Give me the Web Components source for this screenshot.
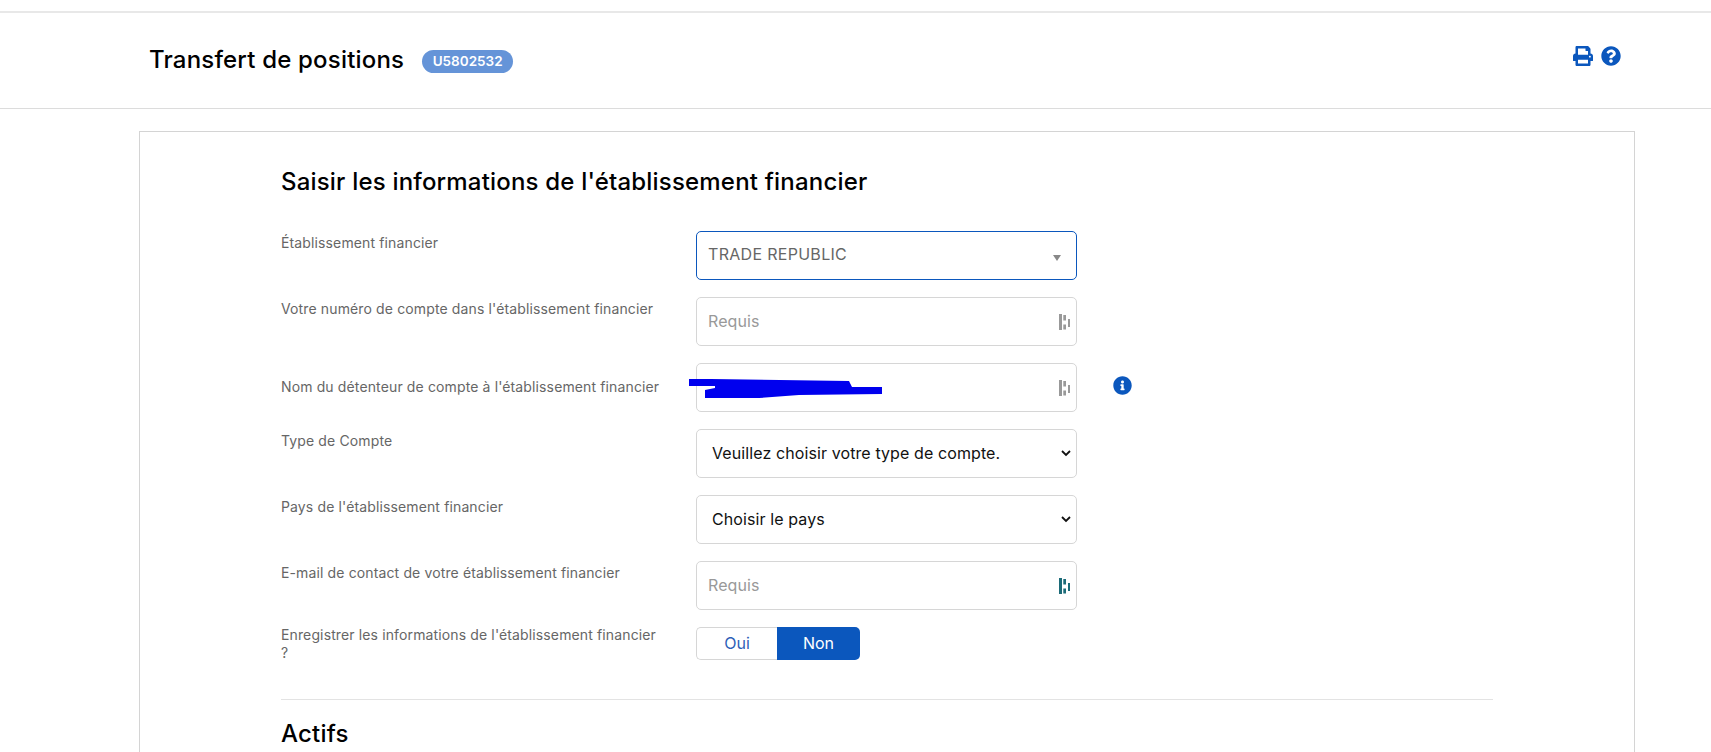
<!DOCTYPE html>
<html lang="fr">
<head>
<meta charset="utf-8">
<title>Transfert de positions</title>
<style>
  html, body { margin: 0; padding: 0; background: #fff; height: 100%; overflow: hidden; }
  body { font-family: Inter, "Liberation Sans", sans-serif; color: #000; }
</style>
</head>
<body>
<page-header account="U5802532">Transfert de positions</page-header>
<form-card>
  <form-section heading="Saisir les informations de l'établissement financier">
    <form-row label="Établissement financier"><combo-field>TRADE REPUBLIC</combo-field></form-row>
    <form-row label="Votre numéro de compte dans l'établissement financier"><text-field>Requis</text-field></form-row>
    <form-row label="Nom du détenteur de compte à l'établissement financier" hint center><text-field redacted></text-field></form-row>
    <form-row label="Type de Compte"><select-field>Veuillez choisir votre type de compte.</select-field></form-row>
    <form-row label="Pays de l'établissement financier"><select-field>Choisir le pays</select-field></form-row>
    <form-row label="E-mail de contact de votre établissement financier"><text-field active>Requis</text-field></form-row>
    <form-row label="Enregistrer les informations de l'établissement financier ?" tight><yes-no></yes-no></form-row>
  </form-section>
  <form-section heading="Actifs" divided></form-section>
</form-card>

<script>
// password manager mark shown at the right end of the text inputs
const FIELD_MARK = `<svg width="11" height="16" viewBox="0 0 11 16" fill="currentColor">
  <path d="M0 0h3v16H0zM4.300 1h2.700v5.500H4.300zM4.300 10.500h2.700v5H4.300zM9 5h2v8H9z"/>
</svg>`;

class PageHeader extends HTMLElement {
  constructor() {
    super();
    this.attachShadow({ mode: 'open' });
  }
  connectedCallback() {
    this.shadowRoot.innerHTML = `
      <style>
        :host { display: flex; align-items: center; box-sizing: border-box; height: 98px; margin-top: 11px; padding: 0 0 3px 149px;
                border-top: 2px solid #e8e8e8; border-bottom: 1px solid #dcdcdc; }
        h1 { margin: 2px 0 0; font-size: 24px; font-weight: 500; line-height: 30px; letter-spacing: .19px; }
        .badge { margin: 4px 0 0 18px; background: #6594d8; color: #fff; border-radius: 12px; height: 23px; line-height: 23px;
                 padding: 0 10.5px; font-size: 13.5px; font-weight: 600; }
        .icons { margin-left: auto; margin-right: 90px; display: flex; gap: 8px; color: #0b57bd; margin-top: -6px; }
        svg { display: block; }
      </style>
      <h1><slot></slot></h1>
      <span class="badge">${this.getAttribute('account')}</span>
      <div class="icons">
        <svg width="20" height="20" viewBox="0 0 512 512" fill="currentColor"><path d="M448 192V77.25c0-8.49-3.37-16.62-9.37-22.63L393.37 9.37c-6-6-14.14-9.37-22.63-9.37H96C78.33 0 64 14.33 64 32v160c-35.35 0-64 28.65-64 64v112c0 8.84 7.16 16 16 16h48v96c0 17.67 14.33 32 32 32h320c17.67 0 32-14.33 32-32v-96h48c8.84 0 16-7.16 16-16V256c0-35.35-28.65-64-64-64zm-64 256H128v-96h256v96zm0-224H128V64h192v48c0 8.84 7.16 16 16 16h48v96zm48 72c-13.25 0-24-10.75-24-24 0-13.26 10.75-24 24-24s24 10.74 24 24c0 13.25-10.75 24-24 24z"/></svg>
        <svg width="20" height="20" viewBox="0 0 512 512" fill="currentColor"><path d="M504 256c0 136.997-111.043 248-248 248S8 392.997 8 256C8 119.083 119.043 8 256 8s248 111.083 248 248zM262.655 90c-54.497 0-89.255 22.957-116.549 63.758-3.536 5.286-2.353 12.415 2.715 16.258l34.699 26.31c5.205 3.947 12.621 3.008 16.665-2.122 17.864-22.658 30.113-35.797 57.303-35.797 20.429 0 45.698 13.148 45.698 32.958 0 14.976-12.363 22.667-32.534 33.976C247.128 238.528 216 254.941 216 296v4c0 6.627 5.373 12 12 12h56c6.627 0 12-5.373 12-12v-1.333c0-28.462 83.186-29.647 83.186-106.667 0-58.002-60.165-102-116.531-102zM256 338c-25.365 0-46 20.635-46 46 0 25.364 20.635 46 46 46s46-20.636 46-46c0-25.365-20.635-46-46-46z"/></svg>
      </div>
    `;
  }
}

class FormCard extends HTMLElement {
  constructor() {
    super();
    this.attachShadow({ mode: 'open' }).innerHTML = `
      <style>
        :host { display: block; box-sizing: border-box; margin: 22px 0 0 139px; width: 1496px; height: 621px;
                border: 1px solid #d4d4d4; border-bottom: 0; padding: 35px 141px 0 141px; }
      </style>
      <slot></slot>
    `;
  }
}

class FormSection extends HTMLElement {
  constructor() {
    super();
    this.attachShadow({ mode: 'open' });
  }
  connectedCallback() {
    const divided = this.hasAttribute('divided');
    this.shadowRoot.innerHTML = `
      <style>
        :host { display: block; ${divided ? 'border-top: 1px solid #e3e3e3; margin-top: 37px; padding-top: 19px;' : ''} }
        h2 { margin: 0 0 34px; font-size: 24px; font-weight: 500; line-height: 30px; letter-spacing: .19px; }
        .rows { display: grid; row-gap: 17px; }
      </style>
      <h2>${this.getAttribute('heading')}</h2>
      <div class="rows"><slot></slot></div>
    `;
  }
}

class FormRow extends HTMLElement {
  constructor() {
    super();
    this.attachShadow({ mode: 'open' });
  }
  connectedCallback() {
    const hint = this.hasAttribute('hint') ? `<svg class="hint" width="19" height="19" viewBox="0 0 512 512" fill="#0b57bd"><path d="M256 8C119.043 8 8 119.083 8 256c0 136.997 111.043 248 248 248s248-111.003 248-248C504 119.083 392.957 8 256 8zm0 110c23.196 0 42 18.804 42 42s-18.804 42-42 42-42-18.804-42-42 18.804-42 42-42zm56 254c0 6.627-5.373 12-12 12h-88c-6.627 0-12-5.373-12-12v-24c0-6.627 5.373-12 12-12h12v-64h-12c-6.627 0-12-5.373-12-12v-24c0-6.627 5.373-12 12-12h64c6.627 0 12 5.373 12 12v100h12c6.627 0 12 5.373 12 12v24z"/></svg>` : '';
    let offset = '2px';
    if (this.hasAttribute('center')) offset = '14px';
    if (this.hasAttribute('tight')) offset = '-1px';
    this.shadowRoot.innerHTML = `
      <style>
        :host { display: flex; align-items: flex-start; }
        .label { box-sizing: border-box; width: 415px; flex: none; padding-right: 35px; color: #666; font-size: 14px;
                 line-height: ${this.hasAttribute('tight') ? '18px' : '20px'}; letter-spacing: .13px; margin-top: ${offset}; }
        .control { width: 381px; flex: none; }
        .hint { margin: 13px 0 0 36px; flex: none; }
      </style>
      <div class="label">${this.getAttribute('label')}</div>
      <div class="control"><slot></slot></div>
      ${hint}
    `;
  }
}

// shared look of the bordered controls
const BOX_CSS = `
  :host { display: block; }
  .box { box-sizing: border-box; position: relative; height: 49px; border: 1px solid #d6d6d6; border-radius: 5px; background: #fff;
         display: flex; align-items: center; font-size: 16px; letter-spacing: .1px; }
`;

class ComboField extends HTMLElement {
  constructor() {
    super();
    this.attachShadow({ mode: 'open' }).innerHTML = `
      <style>${BOX_CSS}
        .box { border-color: #0b57bd; padding: 0 9px 4px 11px; color: #666; letter-spacing: .3px; }
        .caret { margin-left: auto; margin-top: 8px; width: 0; height: 0; border: 4px solid transparent; border-top: 6px solid #888; border-bottom: 0; margin-right: 6px; }
      </style>
      <div class="box"><slot></slot><span class="caret"></span></div>
    `;
  }
}

class TextField extends HTMLElement {
  constructor() {
    super();
    this.attachShadow({ mode: 'open' });
  }
  connectedCallback() {
    const scribble = this.hasAttribute('redacted') ? `
      <svg class="scribble" width="194" height="20" viewBox="0 0 194 20" fill="#0000ee"><path d="M0 0 L22 0 L160 2 L163 8 L193 8 L193 15 L110 16 L70 19 L16 19 L16 11 L26 9 L26 7 L0 7z"/></svg>` : '';
    this.shadowRoot.innerHTML = `
      <style>${BOX_CSS}
        .box { padding: 0 6px 0 11px; color: #999; }
        .text { margin-top: -2px; }
        .mark { margin-left: auto; display: flex; color: ${this.hasAttribute('active') ? '#1c6b78' : '#999'}; }
        svg { display: block; }
        .scribble { position: absolute; left: -8px; top: 15px; }
      </style>
      <div class="box"><span class="text"><slot></slot></span><span class="mark">${FIELD_MARK}</span>${scribble}</div>
    `;
  }
}

class SelectField extends HTMLElement {
  constructor() {
    super();
    this.attachShadow({ mode: 'open' }).innerHTML = `
      <style>${BOX_CSS}
        .box { padding: 0 5px 0 15px; color: #111; }
        .text { margin-top: -1px; }
        svg { display: block; margin-left: auto; }
      </style>
      <div class="box"><span class="text"><slot></slot></span>
        <svg width="10" height="7" viewBox="0 0 10 7" fill="none" stroke="#111" stroke-width="1.8"><path d="M1 1l4 4 4-4"/></svg>
      </div>
    `;
  }
}

class YesNo extends HTMLElement {
  constructor() {
    super();
    this.attachShadow({ mode: 'open' }).innerHTML = `
      <style>
        :host { display: flex; width: 164px; height: 33px; font-size: 16px; }
        span { display: flex; align-items: center; justify-content: center; box-sizing: border-box; padding-bottom: 1px; }
        .oui { width: 81px; color: #2f5fb8; border: 1px solid #d6d6d6; border-right: 0; border-radius: 5px 0 0 5px; }
        .non { width: 83px; color: #fff; background: #0b57bd; border-radius: 0 5px 5px 0; }
      </style>
      <span class="oui">Oui</span><span class="non">Non</span>
    `;
  }
}

customElements.define('page-header', PageHeader);
customElements.define('form-card', FormCard);
customElements.define('form-section', FormSection);
customElements.define('form-row', FormRow);
customElements.define('combo-field', ComboField);
customElements.define('text-field', TextField);
customElements.define('select-field', SelectField);
customElements.define('yes-no', YesNo);
</script>
</body>
</html>
